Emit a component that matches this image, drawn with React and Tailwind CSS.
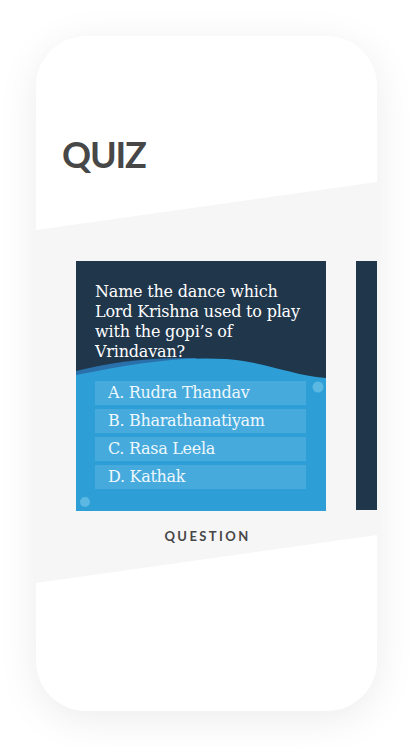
import React from 'react';

const options = ['A. Rudra Thandav', 'B. Bharathanatiyam', 'C. Rasa Leela', 'D. Kathak'];

function QuestionCard() {
  return (
    <div className="relative w-[250px] h-[250px] shrink-0 bg-[#1f364b] overflow-hidden">
      {/* wave */}
      <svg className="absolute inset-0" width="250" height="250" viewBox="0 0 250 250">
        <path d="M0,110 C30,102 70,96 120,97 L120,250 L0,250 Z" fill="#2a70aa" />
        <path d="M0,114 C50,104 100,95 150,98 C190,101 215,114 250,117 L250,250 L0,250 Z" fill="#2d9fd6" />
        <circle cx="242" cy="126" r="5.5" fill="#5bb8e2" />
        <circle cx="9" cy="241" r="5" fill="#5bb8e2" />
      </svg>
      <div className="relative pt-[21px] px-[19px]">
        <p className="text-white text-[16px] leading-[20px] font-['DejaVu_Serif',serif] tracking-[-0.2px]">
          Name the dance which Lord Krishna used to play with the gopi’s of Vrindavan?
        </p>
      </div>
      <div className="absolute left-[19px] top-[120px] w-[211px] flex flex-col gap-[4px]">
        {options.map((o) => (
          <div
            key={o}
            className="h-[24px] bg-[#47aadc] pl-[13px] flex items-center text-[#eef8fd] text-[16px] font-['DejaVu_Serif',serif] tracking-[-0.3px]"
          >
            {o}
          </div>
        ))}
      </div>
    </div>
  );
}

export default function App() {
  return (
    <div className="w-[413px] h-[747px] bg-white p-[36px] font-['Lato',sans-serif]">
      <div className="relative w-[341px] h-[675px] rounded-[50px] bg-white overflow-hidden shadow-[0_8px_40px_rgba(0,0,0,0.08)]">
        {/* diagonal band */}
        <div className="absolute inset-0 bg-[#f6f6f6] [clip-path:polygon(0_194px,100%_146px,100%_499px,0_547px)]" />
        <div className="relative">
          <h1 className="pt-[96px] pl-[26px] text-[36px] leading-[44px] font-bold tracking-[-1.2px] text-[#474747]">QUIZ</h1>
          <div className="mt-[85px] pl-[40px] flex gap-[30px] overflow-hidden">
            <QuestionCard />
            <div className="w-[250px] h-[249px] shrink-0 bg-[#1f364b]" />
          </div>
          <div className="mt-[16px] text-center pl-[2px] text-[13px] font-bold tracking-[2.4px] text-[#474747]">
            QUESTION
          </div>
        </div>
      </div>
    </div>
  );
}
